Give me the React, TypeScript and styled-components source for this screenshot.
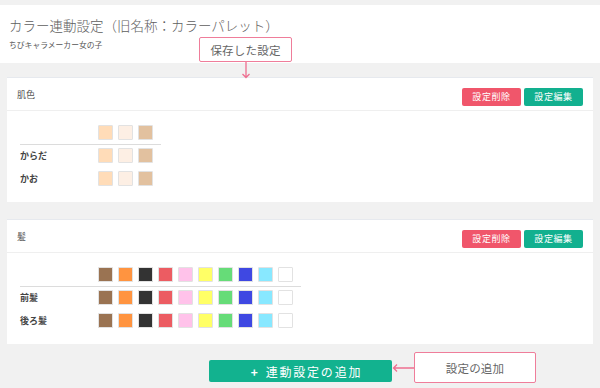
import React from "react";
import styled, { createGlobalStyle } from "styled-components";

type Palette = {
	name: string;
	colors: string[];
	rows: string[];
};

const palettes: Palette[] = [
	{
		name: "肌色",
		colors: ["#ffdcb8", "#fdefe4", "#e2c19f"],
		rows: ["からだ", "かお"],
	},
	{
		name: "髪",
		colors: [
			"#9a7352",
			"#ff9440",
			"#333333",
			"#ec5c62",
			"#ffc2ea",
			"#ffff66",
			"#66dc78",
			"#3f48e2",
			"#88e8ff",
			"#ffffff",
		],
		rows: ["前髪", "後ろ髪"],
	},
];

const App: React.FC = () => {
	return (
		<Page>
			<GlobalStyle />
			{/* page header */}
			<Header>
				<Title>カラー連動設定（旧名称：カラーパレット）</Title>
				<SubTitle>ちびキャラメーカー女の子</SubTitle>
			</Header>
			{/* saved settings */}
			<CardList>
				{palettes.map((palette) => (
					<Card key={palette.name}>
						<CardHeader>
							<CardName>{palette.name}</CardName>
							<ButtonGroup>
								<SmallButton variant="danger">設定削除</SmallButton>
								<SmallButton variant="primary">設定編集</SmallButton>
							</ButtonGroup>
						</CardHeader>
						<CardBody>
							<HeadRow>
								<RowLabel />
								<Swatches>
									{palette.colors.map((c, i) => (
										<Swatch key={i} color={c} />
									))}
								</Swatches>
							</HeadRow>
							<Rows>
								{palette.rows.map((row) => (
									<Row key={row}>
										<RowLabel>{row}</RowLabel>
										<Swatches>
											{palette.colors.map((c, i) => (
												<Swatch key={i} color={c} />
											))}
										</Swatches>
									</Row>
								))}
							</Rows>
						</CardBody>
					</Card>
				))}
			</CardList>
			<Footer>
				<AddButton>
					<Plus>+</Plus>連動設定の追加
				</AddButton>
			</Footer>
			{/* annotations */}
			<SavedNote>
				<NoteBox>保存した設定</NoteBox>
				<DownArrow width="10" height="17" viewBox="0 0 10 17">
					<path d="M5 0 V15.5 M1.5 12 L5 15.5 L8.5 12" fill="none" stroke="#ee6f90" strokeWidth="1.3" />
				</DownArrow>
			</SavedNote>
			<AddNote>
				<LeftArrow width="22" height="10" viewBox="0 0 22 10">
					<path d="M22 5 H1.5 M5 1.5 L1.5 5 L5 8.5" fill="none" stroke="#ee6f90" strokeWidth="1.3" />
				</LeftArrow>
				<NoteBox wide>設定の追加</NoteBox>
			</AddNote>
		</Page>
	);
};

const GlobalStyle = createGlobalStyle`
	html, body {
		margin: 0;
		padding: 0;
		background: #f1f1f1;
	}
	body {
		font-family: "Noto Sans CJK JP", "Noto Sans", sans-serif;
		color: #555;
	}
`;

const Page = styled.div`
	position: relative;
	width: 600px;
	height: 388px;
	overflow: hidden;
	padding-top: 5px;
	box-sizing: border-box;
`;

const Header = styled.div`
	background: #fff;
	padding: 11px 9px 12px;
`;

const Title = styled.div`
	font-size: 13.5px;
	line-height: 18px;
	color: #5e5e5e;
	font-weight: 300;
`;

const SubTitle = styled.div`
	margin-top: 5px;
	font-size: 7.8px;
	line-height: 12px;
	color: #555;
`;

const CardList = styled.div`
	display: flex;
	flex-direction: column;
	gap: 17px;
	padding: 14px 7px 0;
`;

const Card = styled.div`
	background: #fff;
	border-top: 1px solid #e6e9ee;
`;

const CardHeader = styled.div`
	display: flex;
	align-items: center;
	justify-content: space-between;
	height: 32px;
	padding: 0 10px;
	border-bottom: 1px solid #efefef;
`;

const CardName = styled.div`
	font-size: 9px;
	color: #555;
`;

const ButtonGroup = styled.div`
	display: flex;
	gap: 3px;
	margin-top: 5px;
`;

const SmallButton = styled.button<{ variant: "danger" | "primary" }>`
	width: 59px;
	height: 18px;
	border: none;
	border-radius: 2px;
	padding: 0;
	font-family: inherit;
	font-size: 9px;
	letter-spacing: 0.6px;
	color: #fff;
	background: ${(props) => (props.variant === "danger" ? "#f0566b" : "#12b08f")};
`;

const CardBody = styled.div`
	display: flex;
	flex-direction: column;
	align-items: flex-start;
	padding: 14px 13px 16px;
`;

const HeadRow = styled.div`
	display: flex;
	align-items: center;
	padding: 0 8px 4px 0;
	border-bottom: 1px solid #dcdcdc;
`;

const Rows = styled.div`
	display: flex;
	flex-direction: column;
	gap: 8px;
	margin-top: 3px;
`;

const Row = styled.div`
	display: flex;
	align-items: center;
`;

const RowLabel = styled.div`
	width: 78px;
	font-size: 9px;
	line-height: 12px;
	font-weight: bold;
	color: #444;
`;

const Swatches = styled.div`
	display: flex;
	gap: 5px;
`;

const Swatch = styled.div<{ color: string }>`
	width: 15px;
	height: 15px;
	box-sizing: border-box;
	border: 1px solid #e2e2e2;
	border-radius: 1px;
	background: ${(props) => props.color};
`;

const Footer = styled.div`
	display: flex;
	justify-content: center;
	padding-top: 16px;
`;

const AddButton = styled.button`
	display: flex;
	align-items: center;
	justify-content: center;
	width: 183px;
	height: 22px;
	margin-left: 1px;
	border: none;
	border-radius: 2px;
	padding: 0 0 0 12px;
	background: #12b28f;
	color: #fff;
	font-family: inherit;
	font-size: 12px;
	letter-spacing: 1.8px;
`;

const Plus = styled.span`
	font-weight: bold;
	font-size: 12px;
	margin-right: 6px;
`;

const SavedNote = styled.div`
	position: absolute;
	left: 199px;
	top: 37px;
	display: flex;
	flex-direction: column;
	align-items: center;
`;

const NoteBox = styled.div<{ wide?: boolean }>`
	box-sizing: border-box;
	width: ${(props) => (props.wide ? "122px" : "93px")};
	height: ${(props) => (props.wide ? "31px" : "25px")};
	display: flex;
	align-items: center;
	justify-content: center;
	background: #fff;
	border: 1px solid #ef7d9a;
	border-radius: 2px;
	font-size: 11.5px;
	color: #666;
	letter-spacing: 0.2px;
`;

const DownArrow = styled.svg`
	display: block;
`;

const AddNote = styled.div`
	position: absolute;
	left: 392px;
	top: 352px;
	display: flex;
	align-items: center;
`;

const LeftArrow = styled.svg`
	display: block;
`;

export default App;
